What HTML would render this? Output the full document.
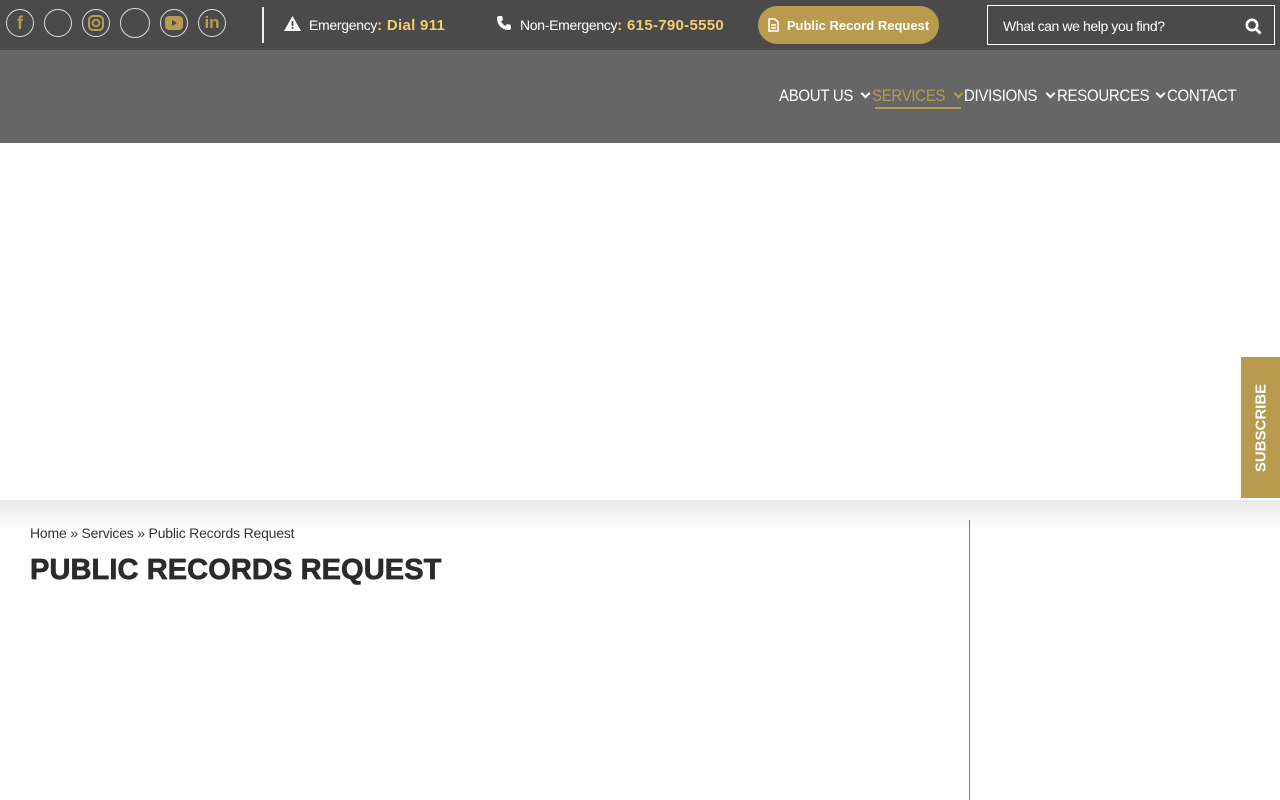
<!DOCTYPE html>
<html><head><meta charset="utf-8"><style>
*{margin:0;padding:0;box-sizing:border-box}
body{width:1280px;height:800px;overflow:hidden;background:#fff;font-family:"Liberation Sans",Arial,sans-serif;position:relative}
.top{position:absolute;left:0;top:0;width:1280px;height:50px;background:#4a4a4a}
.soc{position:absolute;top:9px;width:28px;height:28px;border:1px solid #ddd;border-radius:50%;color:#b99b4f;display:flex;align-items:center;justify-content:center;font-weight:bold}
.div{position:absolute;left:262px;top:7px;width:2px;height:36px;background:#eee}
.t{position:absolute;top:17px;font-size:14px;color:#fff;letter-spacing:-0.3px}
.t b{color:#f5ce6b;font-size:15px;letter-spacing:0.3px}
.btn{position:absolute;left:758px;top:6px;width:181px;height:38px;border-radius:19px;background:#b99b4f;color:#fff;font-size:13px;font-weight:bold;display:flex;align-items:center;justify-content:center;gap:8px}
.search{position:absolute;left:987px;top:5px;width:288px;height:40px;border:1px solid #fff;color:#fff;font-size:14px;padding:12px 0 0 15px;letter-spacing:-0.4px}
.nav{position:absolute;left:0;top:50px;width:1280px;height:93px;background:#666}
.n{position:absolute;top:36px;font-size:17px;color:#fff;letter-spacing:-0.3px;transform:scaleX(0.88);transform-origin:left;white-space:nowrap}
.chev{position:absolute;top:40px;width:7px;height:7px;border-right:2px solid #fff;border-bottom:2px solid #fff;transform:rotate(45deg)}
.shadow{position:absolute;left:0;top:500px;width:1280px;height:30px;background:linear-gradient(#e9e9e9,#fff)}
.sub{position:absolute;left:1241px;top:357px;width:39px;height:141px;background:#b99b4f}
.sub span{position:absolute;left:50%;top:50%;transform:translate(-50%,-50%) rotate(-90deg);color:#fff;font-weight:bold;font-size:15px;white-space:nowrap}
.bc{position:absolute;left:30px;top:525px;font-size:14px;color:#333;letter-spacing:-0.2px}
h1{position:absolute;left:30px;top:554px;font-size:29px;font-weight:900;color:#2b2b2b;letter-spacing:0.1px;-webkit-text-stroke:0.7px #2b2b2b}
.vl{position:absolute;left:969px;top:520px;width:1px;height:280px;background:#777}
</style></head><body>
<div class="top">
<div class="soc" style="left:6px;font-size:18px">f</div>
<div class="soc" style="left:44px"></div>
<div class="soc" style="left:82px"><svg width="18" height="18" viewBox="0 0 18 18" fill="none" stroke="#b99b4f" stroke-width="2"><rect x="2" y="2" width="14" height="14" rx="4"/><circle cx="9" cy="9" r="3.3"/></svg></div>
<div class="soc" style="left:120px;width:30px;height:30px;top:8px"></div>
<div class="soc" style="left:160px"><svg width="18" height="14" viewBox="0 0 18 14"><rect width="18" height="14" rx="4" fill="#b99b4f"/><path d="M7 4l5 3-5 3z" fill="#4a4a4a"/></svg></div>
<div class="soc" style="left:198px;font-size:17px">in</div>
<div class="div"></div>
<svg style="position:absolute;left:284px;top:16px" width="17" height="15" viewBox="0 0 17 15"><path d="M8.5 0L17 15H0z" fill="#fff"/><rect x="7.6" y="5" width="1.8" height="5" fill="#4a4a4a"/><rect x="7.6" y="11" width="1.8" height="1.8" fill="#4a4a4a"/></svg>
<div class="t" style="left:309px">Emergency<b>: Dial 911</b></div>
<svg style="position:absolute;left:497px;top:16px" width="14" height="14" viewBox="0 0 14 14"><path d="M2 0l3 0 1 4-2 1.5c1 2 2.5 3.5 4.5 4.5L10 8l4 1v3c0 1-1 2-2 2C5 14 0 9 0 2 0 1 1 0 2 0z" fill="#fff"/></svg>
<div class="t" style="left:520px">Non-Emergency<b>: 615-790-5550</b></div>
<div class="btn"><svg width="11" height="14" viewBox="0 0 11 14"><path d="M1 1h6l3 3v9H1z" fill="none" stroke="#fff" stroke-width="1.6"/><path d="M3 7h5M3 10h5" stroke="#fff" stroke-width="1.4"/></svg>Public Record Request</div>
<div class="search">What can we help you find?
<svg style="position:absolute;right:12px;top:12px" width="17" height="17" viewBox="0 0 17 17"><circle cx="7" cy="7" r="5.2" fill="none" stroke="#fff" stroke-width="2.6"/><path d="M11 11l4.5 4.5" stroke="#fff" stroke-width="3"/></svg></div>
</div>
<div class="nav">
<div class="n" style="left:779px">ABOUT US</div><div class="chev" style="left:862px"></div>
<div class="n" style="left:872px;color:#b99b4f">SERVICES</div><div class="chev" style="left:955px;border-color:#b99b4f"></div>
<div style="position:absolute;left:875px;top:57px;width:86px;height:2px;background:#b99b4f"></div>
<div class="n" style="left:964px">DIVISIONS</div><div class="chev" style="left:1047px"></div>
<div class="n" style="left:1057px">RESOURCES</div><div class="chev" style="left:1157px"></div>
<div class="n" style="left:1167px">CONTACT</div>
</div>
<div class="shadow"></div>
<div class="sub"><span>SUBSCRIBE</span></div>
<div class="bc">Home » Services » Public Records Request</div>
<h1>PUBLIC RECORDS REQUEST</h1>
<div class="vl"></div>
</body></html>
